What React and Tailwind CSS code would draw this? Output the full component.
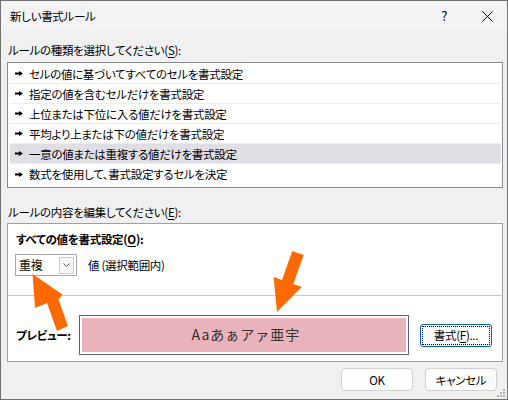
import React from "react";

const rules = [
  "セルの値に基づいてすべてのセルを書式設定",
  "指定の値を含むセルだけを書式設定",
  "上位または下位に入る値だけを書式設定",
  "平均より上または下の値だけを書式設定",
  "一意の値または重複する値だけを書式設定",
  "数式を使用して、書式設定するセルを決定",
];

const Pointer = () => (
  <svg width="8" height="5" viewBox="0 0 8 5" className="shrink-0">
    <polygon points="0,1.5 4,1.5 4,0 8,2.5 4,5 4,3.5 0,3.5" fill="#000" />
  </svg>
);

const Arrows = () => (
  <svg
    width="508"
    height="400"
    viewBox="0 0 508 400"
    className="pointer-events-none absolute left-[-1px] top-[-1px]"
  >
    <polygon
      points="32.5,274 62.5,294.5 58.5,299.5 68,326 57,331 47,303 35,308"
      fill="#ff6a00"
    />
    <polygon
      points="277,312 273.6,276.9 282,279.9 292.3,251 303.7,255 293.3,283.9 301.8,286.9"
      fill="#ff6a00"
    />
  </svg>
);

const Grip = () => (
  <svg width="10" height="10" viewBox="0 0 10 10" className="pointer-events-none absolute bottom-[1px] right-[1px]">
    <rect x="7" y="1" width="2" height="2" fill="#b4b4b4" />
    <rect x="4" y="4" width="2" height="2" fill="#b4b4b4" />
    <rect x="7" y="4" width="2" height="2" fill="#b4b4b4" />
    <rect x="1" y="7" width="2" height="2" fill="#b4b4b4" />
    <rect x="4" y="7" width="2" height="2" fill="#b4b4b4" />
    <rect x="7" y="7" width="2" height="2" fill="#b4b4b4" />
  </svg>
);

const App = () => {
  return (
    <div className="relative h-[400px] w-[508px] overflow-hidden border border-[#707070] bg-[#f0f0f0] font-['Noto_Sans_CJK_JP',sans-serif] text-[11.5px] leading-[16px] tracking-[-0.3px] text-black [font-feature-settings:'palt']">
      {/* title bar */}
      <div className="flex h-[30px] items-center bg-[#f3f3f3] pl-[9px]">
        <span>新しい書式ルール</span>
        <span className="ml-auto mr-[35px] text-[13px]">?</span>
        <svg width="11" height="11" viewBox="0 0 11 11" className="mr-[14px]">
          <path d="M0.5 0.5 L10.5 10.5 M10.5 0.5 L0.5 10.5" stroke="#000" strokeWidth="1" />
        </svg>
      </div>

      <div className="ml-[6px] w-[496px]">
        <p className="mt-[11px] h-[16px] pl-[1px]">
          ルールの種類を選択してください(<span className="underline underline-offset-2">S</span>):
        </p>

        <div className="mt-[4px] h-[126px] border border-[#8c8c8c] bg-white pt-[1px]">
          {rules.map((rule, i) => (
            <div
              key={rule}
              className={
                "ml-[2px] mr-[1px] flex h-[20px] items-center gap-[6px] pl-[5px] " +
                (i === 4 ? "bg-[#dedee4] " : "") +
                (i < rules.length - 1 ? "border-b border-[#ececec]" : "")
              }
            >
              <Pointer />
              <span>{rule}</span>
            </div>
          ))}
        </div>

        <p className="mt-[16px] h-[16px] pl-[1px]">
          ルールの内容を編集してください(<span className="underline underline-offset-2">E</span>):
        </p>

        <div className="mt-[3px] h-[139px] border border-[#a0a0a0] bg-white">
          <div className="px-[7px] pt-[7px]">
            <p className="h-[16px] pl-[1px] font-bold">
              すべての値を書式設定(<span className="underline underline-offset-2">O</span>):
            </p>
            <div className="mt-[7px] flex items-center">
              <div className="flex h-[22px] w-[62px] items-center border border-[#a8a8a8] bg-white pl-[3px] pr-[2px]">
                <span className="text-[12px]">重複</span>
                <div className="ml-auto flex h-[17px] w-[15px] items-center justify-center border border-[#cdcdcd] bg-[#f7f7f7]">
                  <svg width="7" height="4" viewBox="0 0 7 4">
                    <path d="M0.5 0.5 L3.5 3.5 L6.5 0.5" stroke="#606060" fill="none" strokeWidth="1" />
                  </svg>
                </div>
              </div>
              <span className="ml-[11px]">値 (選択範囲内)</span>
            </div>
          </div>

          <div className="mt-[19px] h-px bg-[#c8c8c8]" />

          <div className="mt-[19px] flex items-center px-[7px]">
            <span className="w-[64px] pl-[1px] font-bold">プレビュー:</span>
            <div className="h-[40px] w-[330px] border border-[#646464] bg-white p-[2px]">
              <div className="flex h-full items-center justify-center bg-[#eab2bb] pb-[2px] pl-[4px] text-[14px] tracking-[1px] text-[#333] [font-feature-settings:normal]">
                Aaあぁアァ亜宇
              </div>
            </div>
            <div className="ml-[11px] h-[23px] w-[72px] rounded-[3px] border border-[#0067c0] bg-[#fdfdfd] p-[1px]">
              <div className="flex h-full items-center justify-center border border-dotted border-black">
                書式(<span className="underline underline-offset-2">F</span>)...
              </div>
            </div>
          </div>
        </div>
      </div>

      <div className="mt-[6px] flex justify-end gap-[12px] pr-[10px]">
        <div className="flex h-[23px] w-[72px] items-center justify-center rounded-[4px] border border-[#d0d0d0] bg-[#fdfdfd]">
          OK
        </div>
        <div className="flex h-[23px] w-[72px] items-center justify-center rounded-[4px] border border-[#d0d0d0] bg-[#fdfdfd]">
          キャンセル
        </div>
      </div>

      <Arrows />
      <Grip />
    </div>
  );
};

export default App;
